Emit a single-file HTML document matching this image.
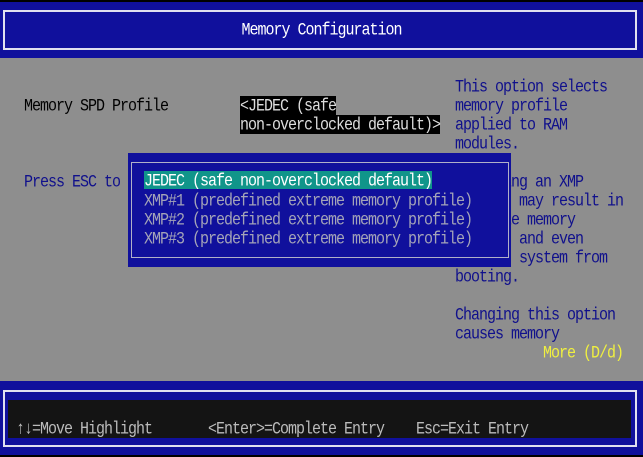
<!DOCTYPE html>
<html><head><meta charset="utf-8"><style>
*{margin:0;padding:0;box-sizing:border-box}
body{width:643px;height:457px;background:#000;position:relative;overflow:hidden;font-family:"Liberation Mono",monospace;font-size:15px;letter-spacing:-1px}
.a{position:absolute;white-space:pre;line-height:19px;height:19px;transform:scaleY(1.18);transform-origin:50% 55%}
.r{position:absolute}
.b{color:#10108c}
</style></head><body>
<div class="r" style="left:0;top:2px;width:643px;height:56px;background:#10109c"></div>
<div class="r" style="left:3px;top:10px;width:634px;height:40px;border:2px solid #e0e0f0"></div>
<div class="a" style="left:0;width:643px;top:21px;text-align:center;color:#fff">Memory Configuration</div>
<div class="r" style="left:0;top:58px;width:643px;height:323px;background:#8e8e8e"></div>
<div class="a" style="left:24px;top:97px;color:#000">Memory SPD Profile</div>
<div class="a b" style="left:24px;top:173px">Press ESC to return.</div>
<div class="r" style="left:240px;top:96px;width:96px;height:19px;background:#000"></div>
<div class="r" style="left:240px;top:115px;width:200px;height:19px;background:#000"></div>
<div class="a" style="left:240px;top:97px;color:#ddd">&lt;JEDEC (safe</div>
<div class="a" style="left:240px;top:116px;color:#ddd">non-overclocked default)&gt;</div>
<div class="a b" style="left:455px;top:78px">This option selects</div>
<div class="a b" style="left:455px;top:97px">memory profile</div>
<div class="a b" style="left:455px;top:116px">applied to RAM</div>
<div class="a b" style="left:455px;top:135px">modules.</div>
<div class="a b" style="left:455px;top:173px">Selecting an XMP</div>
<div class="a b" style="left:455px;top:192px">profile may result in</div>
<div class="a b" style="left:455px;top:211px">unstable memory</div>
<div class="a b" style="left:455px;top:230px">timings and even</div>
<div class="a b" style="left:455px;top:249px">prevent system from</div>
<div class="a b" style="left:455px;top:268px">booting.</div>
<div class="a b" style="left:455px;top:306px">Changing this option</div>
<div class="a b" style="left:455px;top:325px">causes memory</div>
<div class="a" style="left:543px;top:344px;color:#f0f040">More (D/d)</div>
<div class="r" style="left:128px;top:153px;width:383px;height:114px;background:#10109c"></div>
<div class="r" style="left:131px;top:162px;width:378px;height:96px;border:1px solid #b0b0c8"></div>
<div class="r" style="left:144px;top:171px;width:288px;height:18px;background:#10958a"></div>
<div class="a" style="left:144px;top:172px;color:#fff">JEDEC (safe non-overclocked default)</div>
<div class="a" style="left:144px;top:192px;color:#a4a4b8">XMP#1 (predefined extreme memory profile)</div>
<div class="a" style="left:144px;top:211px;color:#a4a4b8">XMP#2 (predefined extreme memory profile)</div>
<div class="a" style="left:144px;top:230px;color:#a4a4b8">XMP#3 (predefined extreme memory profile)</div>
<div class="r" style="left:0;top:381px;width:643px;height:74px;background:#10109c"></div>
<div class="r" style="left:3px;top:390px;width:634px;height:57px;border:2px solid #e0e0f0"></div>
<div class="r" style="left:8px;top:400px;width:623px;height:38px;background:#141414"></div>
<div class="a" style="left:16px;top:420px;color:#bbb">↑↓=Move Highlight</div>
<div class="a" style="left:208px;top:420px;color:#bbb">&lt;Enter&gt;=Complete Entry</div>
<div class="a" style="left:416px;top:420px;color:#bbb">Esc=Exit Entry</div>
</body></html>
